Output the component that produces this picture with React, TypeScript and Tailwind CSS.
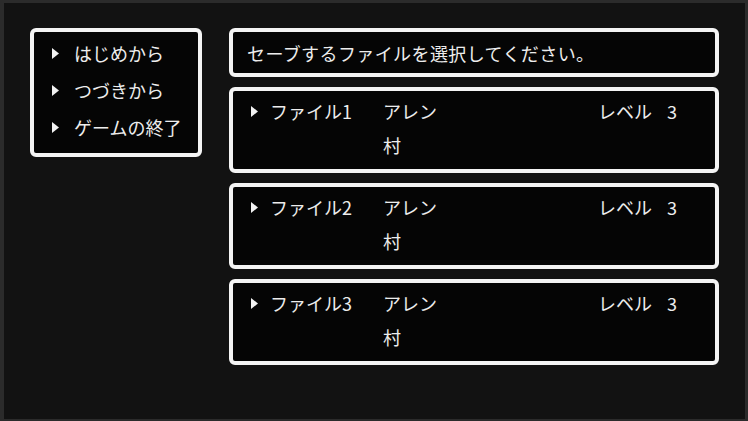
const FONT = { fontFamily: '"Noto Sans CJK JP", "Noto Sans", sans-serif' }

const MENU = ['はじめから', 'つづきから', 'ゲームの終了']

const FILES = [
  { slot: 'ファイル1', hero: 'アレン', place: '村', level: 3 },
  { slot: 'ファイル2', hero: 'アレン', place: '村', level: 3 },
  { slot: 'ファイル3', hero: 'アレン', place: '村', level: 3 },
]

function Cursor() {
  return (
    <svg width="7" height="11" viewBox="0 0 7 11" className="block">
      <path d="M0 0 L7 5.5 L0 11 Z" fill="#f2f2f2" />
    </svg>
  )
}

const boxClass = 'rounded-[6px] border-4 border-[#f4f4f4] bg-[#050505]'

export default function App() {
  return (
    <div
      className="h-[421px] w-[748px] overflow-hidden border-b-2 border-l-4 border-r-[3px] border-t-[3px] border-[#2b2b2b] bg-[#121212] text-[18px] text-[#ededed]"
      style={FONT}
    >
      <div className="flex gap-[27px] pl-[26px] pt-[25px]">
        {/* main menu */}
        <div className={`${boxClass} flex h-[129px] w-[172px] flex-col gap-[17px] pl-[18px] pt-[11px]`}>
          {MENU.map((label) => (
            <div key={label} className="flex h-[20px] items-center leading-[20px]">
              <Cursor />
              <span className="ml-[15px] whitespace-nowrap">{label}</span>
            </div>
          ))}
        </div>

        {/* save slots */}
        <div className="flex w-[490px] flex-col gap-[10px]">
          <div className={`${boxClass} flex h-[49px] items-center pl-[14px]`}>
            <span className="whitespace-nowrap leading-[20px] tracking-[0.4px]">
              セーブするファイルを選択してください。
            </span>
          </div>

          {FILES.map((file) => (
            <div key={file.slot} className={`${boxClass} h-[86px] pl-[18px] pt-[10px]`}>
              <div className="grid h-[20px] grid-cols-[19px_113px_215px_69px_auto] items-center leading-[20px]">
                <Cursor />
                <span className="whitespace-nowrap">{file.slot}</span>
                <span className="whitespace-nowrap">{file.hero}</span>
                <span className="whitespace-nowrap">レベル</span>
                <span>{file.level}</span>
              </div>
              <div className="mt-[14px] grid h-[20px] grid-cols-[19px_113px_auto] items-center leading-[20px]">
                <span />
                <span />
                <span>{file.place}</span>
              </div>
            </div>
          ))}
        </div>
      </div>
    </div>
  )
}
